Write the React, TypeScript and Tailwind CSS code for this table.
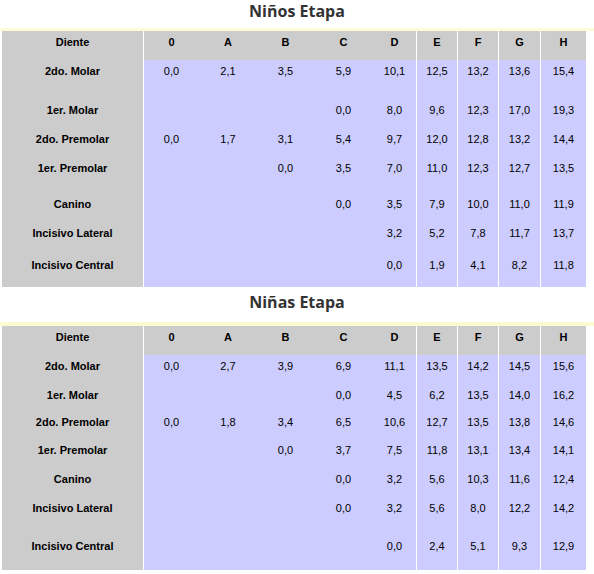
const COLS = ['0', 'A', 'B', 'C', 'D', 'E', 'F', 'G', 'H'];
const WIDTHS = ['w-[56px]', 'w-[58px]', 'w-[57px]', 'w-[59px]', 'w-[43px]', 'w-[41px]', 'w-[41px]', 'w-[42px]', 'w-[46px]'];
// columns with a white rule on their left side
const SEP = [true, false, false, false, false, true, true, true, true];

type Row = { label: string; h: string; values: string[] };

const NINOS: { head: string; rows: Row[] } = {
  head: 'h-[29px]',
  rows: [
    { label: '2do. Molar', h: 'h-[39px]', values: ['0,0', '2,1', '3,5', '5,9', '10,1', '12,5', '13,2', '13,6', '15,4'] },
    { label: '1er. Molar', h: 'h-[29px]', values: ['', '', '', '0,0', '8,0', '9,6', '12,3', '17,0', '19,3'] },
    { label: '2do. Premolar', h: 'h-[29px]', values: ['0,0', '1,7', '3,1', '5,4', '9,7', '12,0', '12,8', '13,2', '14,4'] },
    { label: '1er. Premolar', h: 'h-[36px]', values: ['', '', '0,0', '3,5', '7,0', '11,0', '12,3', '12,7', '13,5'] },
    { label: 'Canino', h: 'h-[29px]', values: ['', '', '', '0,0', '3,5', '7,9', '10,0', '11,0', '11,9'] },
    { label: 'Incisivo Lateral', h: 'h-[32px]', values: ['', '', '', '', '3,2', '5,2', '7,8', '11,7', '13,7'] },
    { label: 'Incisivo Central', h: 'h-[33px]', values: ['', '', '', '', '0,0', '1,9', '4,1', '8,2', '11,8'] },
  ],
};

const NINAS: { head: string; rows: Row[] } = {
  head: 'h-[29px]',
  rows: [
    { label: '2do. Molar', h: 'h-[29px]', values: ['0,0', '2,7', '3,9', '6,9', '11,1', '13,5', '14,2', '14,5', '15,6'] },
    { label: '1er. Molar', h: 'h-[27px]', values: ['', '', '', '0,0', '4,5', '6,2', '13,5', '14,0', '16,2'] },
    { label: '2do. Premolar', h: 'h-[28px]', values: ['0,0', '1,8', '3,4', '6,5', '10,6', '12,7', '13,5', '13,8', '14,6'] },
    { label: '1er. Premolar', h: 'h-[29px]', values: ['', '', '0,0', '3,7', '7,5', '11,8', '13,1', '13,4', '14,1'] },
    { label: 'Canino', h: 'h-[29px]', values: ['', '', '', '0,0', '3,2', '5,6', '10,3', '11,6', '12,4'] },
    { label: 'Incisivo Lateral', h: 'h-[38px]', values: ['', '', '', '0,0', '3,2', '5,6', '8,0', '12,2', '14,2'] },
    { label: 'Incisivo Central', h: 'h-[35px]', values: ['', '', '', '', '0,0', '2,4', '5,1', '9,3', '12,9'] },
  ],
};

function EruptionTable({ data }: { data: { head: string; rows: Row[] } }) {
  return (
    <div className="ml-[2px] w-[589px] text-[11px] leading-[13px] text-black">
      <div className={`flex ${data.head} font-bold`}>
        <div className="w-[141px] bg-[#cccccc] pt-[5px] text-center">Diente</div>
        {COLS.map((c, i) => (
          <div
            key={c}
            className={`${WIDTHS[i]} bg-[#cccccc] pt-[5px] text-center ${SEP[i] ? 'border-l border-white' : ''}`}
          >
            {c}
          </div>
        ))}
      </div>
      {data.rows.map((r) => (
        <div key={r.label} className={`flex ${r.h}`}>
          <div className="w-[141px] bg-[#cccccc] pt-[5px] text-center font-bold">{r.label}</div>
          {r.values.map((v, i) => (
            <div
              key={i}
              className={`${WIDTHS[i]} bg-[#ccccff] pt-[5px] text-center ${SEP[i] ? 'border-l border-white' : ''}`}
            >
              {v}
            </div>
          ))}
        </div>
      ))}
    </div>
  );
}

export default function App() {
  return (
    <div className="w-[594px] h-[574px] bg-white font-['Liberation_Sans',Arial,sans-serif]">
      <h2 className="h-[28px] text-center font-['Open_Sans',sans-serif] text-[16px] font-bold leading-[22px] text-[#333333]">
        Niños Etapa
      </h2>
      <div className="h-[3px] bg-[#fdfcd8]" />
      <EruptionTable data={NINOS} />
      <h2 className="h-[35px] pt-[4px] text-center font-['Open_Sans',sans-serif] text-[16px] font-bold leading-[22px] text-[#333333]">
        Niñas Etapa
      </h2>
      <div className="h-[4px] bg-[#fdfcd0]" />
      <EruptionTable data={NINAS} />
    </div>
  );
}
